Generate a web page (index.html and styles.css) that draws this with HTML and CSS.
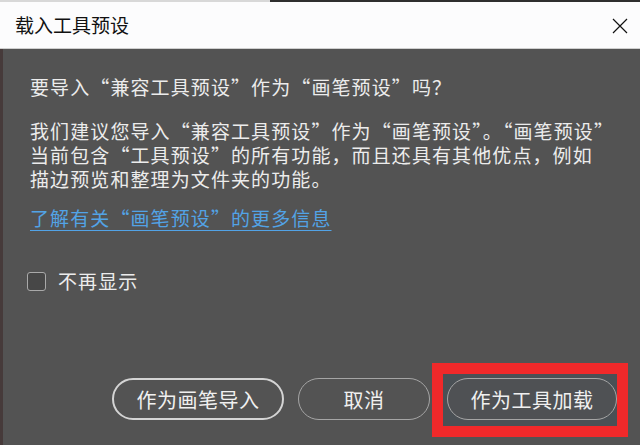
FILE: index.html
```html
<!DOCTYPE html>
<html lang="zh-CN">

<head>
	<meta charset="UTF-8" />
	<meta name="viewport" content="width=device-width, initial-scale=1.0" />
	<title>载入工具预设</title>
	<link rel="stylesheet" href="styles.css">
</head>

<body>
	<div class="topline"></div>
	<div class="titlebar">
		<p class="title">载入工具预设</p>
		<svg class="close" width="16" height="16" viewBox="0 0 16 16">
			<path d="M1 1 L15 15 M15 1 L1 15" stroke="#111" stroke-width="1.2" fill="none" />
		</svg>
	</div>
	<div class="dialog">
		<p class="question">要导入“兼容工具预设”作为“画笔预设”吗？</p>
		<p class="desc">我们建议您导入“兼容工具预设”作为“画笔预设”。“画笔预设”<br>当前包含“工具预设”的所有功能，而且还具有其他优点，例如<br>描边预览和整理为文件夹的功能。</p>
		<a class="more" href="#">了解有关“画笔预设”的更多信息</a>
		<label class="check-row">
			<span class="check"></span>
			<span>不再显示</span>
		</label>
		<div class="buttons">
			<button class="btn btn-default btn-brush">作为画笔导入</button>
			<button class="btn btn-cancel">取消</button>
			<button class="btn btn-tool">作为工具加载</button>
		</div>
	</div>
	<div class="highlight"></div>
</body>

</html>
```
FILE: styles.css
```css
body {
	margin: 0;
	width: 640px;
	height: 445px;
	overflow: hidden;
	background-color: #535353;
	font-family: "Noto Sans CJK SC", "Liberation Sans", sans-serif;
	position: relative;
}

.topline {
	height: 2px;
	background: linear-gradient(to right, #d8d8d8 0, #d8d8d8 270px, #2e2e2e 270px);
}

.titlebar {
	height: 46px;
	background-color: #fcfcfd;
	border-bottom: 1px solid #cfcfcf;
	display: flex;
	align-items: center;
	justify-content: space-between;
	padding: 0 12px 0 15px;
}

.title {
	margin: 0;
	font-size: 19px;
	color: #111;
	line-height: 24px;
}

.close {
	margin-top: 2px;
}

.dialog {
	height: 396px;
	box-sizing: border-box;
	border-left: 3px solid #463a3a;
	padding: 26px 0 0 27px;
	color: #ececec;
	font-size: 19px;
	line-height: 24px;
	letter-spacing: 1.1px;
}

.question {
	margin: 0;
}

.desc {
	margin: 20px 0 0;
}

.more {
	display: inline-block;
	margin-top: 15px;
	color: #52a3e6;
	text-decoration: underline;
	text-underline-offset: 4px;
}

.check-row {
	display: flex;
	align-items: center;
	gap: 12px;
	margin-top: 39px;
	margin-left: -3px;
}

.check {
	width: 17px;
	height: 17px;
	border: 1.5px solid #a9a9a9;
	border-radius: 3px;
	background-color: #474747;
}

.buttons {
	display: flex;
	margin-top: 85px;
	margin-left: 82px;
}

.btn {
	height: 42px;
	box-sizing: border-box;
	border-radius: 21px;
	background-color: #535353;
	color: #f0f0f0;
	font-family: "Noto Sans CJK SC", "Liberation Sans", sans-serif;
	font-size: 20px;
	letter-spacing: 0.5px;
	border: 1px solid #a5a5a5;
	padding: 0;
	position: relative;
	z-index: 1;
}

.btn-default {
	border: 2px solid #d4d4d4;
}

.btn-brush {
	width: 172px;
}

.btn-cancel {
	width: 132px;
	margin-left: 14px;
}

.btn-tool {
	width: 170px;
	margin-left: 17px;
	background-color: #4f5154;
}

.highlight {
	position: absolute;
	left: 432px;
	top: 363px;
	width: 196px;
	height: 74px;
	box-sizing: border-box;
	border: 11px solid #f0292a;
	background-color: #4a5055;
}
```
